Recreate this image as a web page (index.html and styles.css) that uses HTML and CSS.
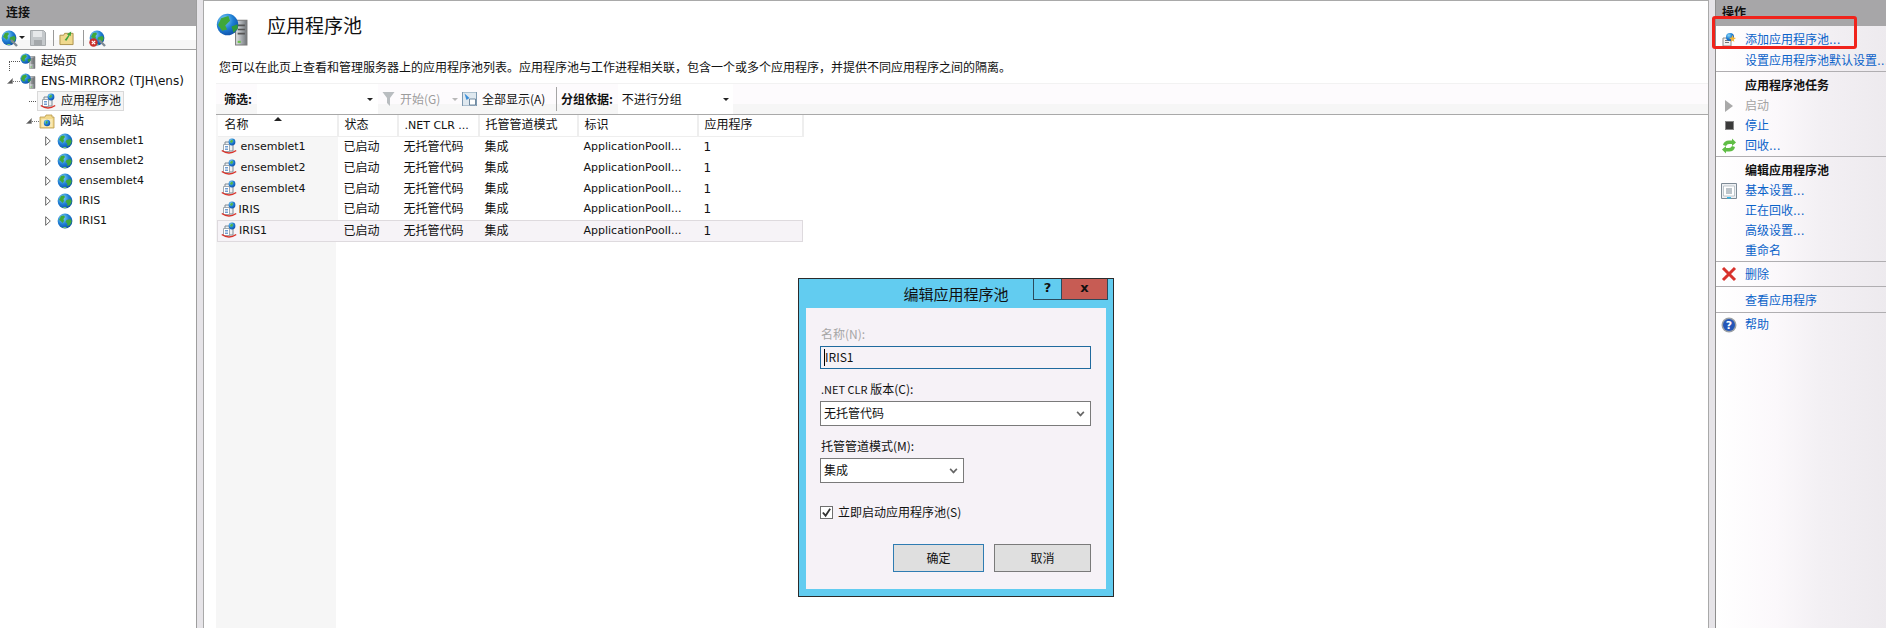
FILE: index.html
```html
<!DOCTYPE html>
<html lang="zh-CN">
<head>
<meta charset="utf-8">
<title>应用程序池</title>
<link rel="stylesheet" href="styles.css">
</head>
<body>
<svg class="defs" aria-hidden="true">
  <defs>
    <radialGradient id="gb" cx="35%" cy="30%" r="75%"><stop offset="0" stop-color="#86d6f8"/><stop offset=".55" stop-color="#1f7fd4"/><stop offset="1" stop-color="#0e4fa8"/></radialGradient>
    <linearGradient id="gs" x1="0" x2="1"><stop offset="0" stop-color="#e4e6e8"/><stop offset=".5" stop-color="#a9adb1"/><stop offset="1" stop-color="#6f7478"/></linearGradient>
    <symbol id="globe" viewBox="0 0 16 16">
      <circle cx="8" cy="8" r="7.4" fill="url(#gb)"/>
      <path d="M4 3 7 2.500 8 4 6.500 6 7 8 5.500 10 3.800 8 2 7Z" fill="#3fa83a"/>
      <path d="M9.500 7 13.500 6 14.800 8.500 13 12 10.500 13 10 10 8.500 9Z" fill="#3fa83a"/>
      <path d="M5 14 10 14 8 15.200Z" fill="#7bd06c"/>
    </symbol>
    <symbol id="server" viewBox="0 0 16 16">
      <path d="M9.500 3.500h5.500v12H9.500z" fill="url(#gs)" stroke="#777" stroke-width=".5"/>
      <path d="M10.500 6h3.500M10.500 8h3.500M10.500 10h3.500" stroke="#555" stroke-width=".8"/>
      <path d="M10.500 13.500h1.500v1h-1.500z" fill="#6ac34a"/>
      <circle cx="5.600" cy="5.600" r="5.200" fill="url(#gb)"/>
      <path d="M2.500 2.600 6 1.400 6.800 3.800 4.500 6 5.400 8 3 8.600 1 5.800Z" fill="#3fa83a"/>
      <path d="M7.500 6.500 10.400 5.400 10.600 7.500 8.500 9.600Z" fill="#2f9a3a"/>
    </symbol>
    <symbol id="pool" viewBox="0 0 16 16">
      <path d="M4 4h8v9H4z" fill="#eef0f2" stroke="#7f8a94"/>
      <path d="M2.500 6.500h6v7h-6z" fill="#fff" stroke="#8a949c" stroke-width=".8"/>
      <path d="M4 8.500h3M4 10h3M4 11.500h3" stroke="#4c86c6" stroke-width=".8"/>
      <circle cx="11" cy="4" r="3.400" fill="url(#gb)"/>
      <path d="M9.500 2.400 11.500 1.600 12 3.400 10.500 5 9 4Z" fill="#53b348"/>
      <path d="M.8 12.500Q8 17.500 15.200 12.500" fill="none" stroke="#d9342b" stroke-width="1.500"/>
    </symbol>
    <symbol id="folder" viewBox="0 0 16 16">
      <path d="M1 4h5l1-2h6v2h2v11H1z" fill="#f2d98c" stroke="#b8984a" stroke-width=".8"/>
      <path d="M2.500 6h11v8h-11z" fill="#f9e9b4"/>
      <circle cx="8" cy="10" r="3.200" fill="url(#gb)"/>
      <path d="M6.500 8.500 8.500 8 8.500 10 7 11Z" fill="#3fa83a"/>
    </symbol>
    <symbol id="twirl-open" viewBox="0 0 6 6"><path d="M5.500.5v5h-5z" fill="#595959" stroke="#8a8a8a" stroke-width=".6"/></symbol>
    <symbol id="twirl-closed" viewBox="0 0 6 10"><path d="M.7.7 5.300 5 .7 9.300z" fill="#fff" stroke="#666"/></symbol>
  </defs>
</svg>

<div class="app">
  <aside class="left">
    <div class="panel-head">连接</div>
    <div class="tools">
      <span class="ic-stop first-tool">
        <svg class="ic16"><use href="#globe"/></svg>
        <svg class="ic-plug" viewBox="0 0 8 8"><path d="M1 1 7 7" stroke="#7d8a94" stroke-width="2.400"/></svg>
      </span>
      <span class="caret dark"></span>
      <svg class="ic-save" viewBox="0 0 16 16"><path d="M.5.500h13l2 2v13H.5z" fill="#c4c8cb" stroke="#a6aaad"/><path d="M3 1h9v6H3z" fill="#e6e8ea"/><path d="M4 10h8v5.500H4z" fill="#a4a8ab"/></svg>
      <span class="tsep"></span>
      <svg class="ic-up" viewBox="0 0 16 16"><path d="M1 5h4l1-2h9v12H1z" fill="#f0d98e" stroke="#a98f49"/><path d="M6 10 10 5 8.500 4 13 1 12.500 6 11.500 5 8 11z" fill="#3ea53a"/></svg>
      <span class="tsep far"></span>
      <span class="ic-stop">
        <svg class="ic16"><use href="#globe"/></svg>
        <svg class="ic-plug" viewBox="0 0 8 8"><path d="M1 1 7 7" stroke="#7d8a94" stroke-width="2.400"/></svg>
        <svg class="ic-x" viewBox="0 0 9 9"><circle cx="4.500" cy="4.500" r="4.200" fill="#c9302c"/><path d="M2.800 2.800 6.200 6.200M6.200 2.800 2.800 6.200" stroke="#fff" stroke-width="1.200"/></svg>
      </span>
    </div>
    <ul class="tree">
      <li class="node n-start"><i class="elbow tall"></i><svg class="ic16"><use href="#server"/></svg><span>起始页</span></li>
      <li class="node n-host"><svg class="twirl-o"><use href="#twirl-open"/></svg><i class="dots d1"></i><svg class="ic16"><use href="#server"/></svg><span>ENS-MIRROR2 (TJH\ens)</span></li>
      <li class="node n-pool"><i class="elbow"></i><span class="sel"><svg class="ic16"><use href="#pool"/></svg><span>应用程序池</span></span></li>
      <li class="node n-sites"><svg class="twirl-o"><use href="#twirl-open"/></svg><i class="dots d2"></i><svg class="ic16"><use href="#folder"/></svg><span>网站</span></li>
      <li class="node n-site"><svg class="twirl-c"><use href="#twirl-closed"/></svg><svg class="ic16"><use href="#globe"/></svg><span>ensemblet1</span></li>
      <li class="node n-site"><svg class="twirl-c"><use href="#twirl-closed"/></svg><svg class="ic16"><use href="#globe"/></svg><span>ensemblet2</span></li>
      <li class="node n-site"><svg class="twirl-c"><use href="#twirl-closed"/></svg><svg class="ic16"><use href="#globe"/></svg><span>ensemblet4</span></li>
      <li class="node n-site"><svg class="twirl-c"><use href="#twirl-closed"/></svg><svg class="ic16"><use href="#globe"/></svg><span>IRIS</span></li>
      <li class="node n-site"><svg class="twirl-c"><use href="#twirl-closed"/></svg><svg class="ic16"><use href="#globe"/></svg><span>IRIS1</span></li>
    </ul>
  </aside>

  <main class="center">
    <header class="title-row">
      <svg class="ic-title"><use href="#server"/></svg>
      <h1>应用程序池</h1>
    </header>
    <p class="desc">您可以在此页上查看和管理服务器上的应用程序池列表。应用程序池与工作进程相关联，包含一个或多个应用程序，并提供不同应用程序之间的隔离。</p>
    <div class="filter">
      <span class="f-label">筛选:</span>
      <span class="combo c-filter"><span class="caret dark"></span></span>
      <svg class="ic-funnel" viewBox="0 0 12 14"><path d="M0 0h12L7.500 6v8L4.500 11V6z" fill="#b9bdc0"/></svg>
      <span class="f-off">开始(G)</span>
      <span class="caret pale"></span>
      <svg class="ic-show" viewBox="0 0 14 14"><path d="M0 0h14v14H0z" fill="#dfe8ef" stroke="#7d99b0"/><path d="M2 1.500 7 6 4 8z" fill="#3d8fd8"/><path d="M7 7h6v6H7z" fill="#fff" stroke="#52708a" stroke-width=".8"/></svg>
      <span class="f-on">全部显示(A)</span>
      <span class="f-sep"></span>
      <span class="f-label">分组依据:</span>
      <span class="combo c-group">不进行分组<span class="caret dark"></span></span>
    </div>
    <div class="list">
      <table class="grid">
        <thead>
          <tr><th class="w-name">名称<span class="sort"></span></th><th class="w-state">状态</th><th class="w-clr"><span class="lat">.NET CLR ...</span></th><th class="w-mode">托管管道模式</th><th class="w-id">标识</th><th class="w-apps">应用程序</th></tr>
        </thead>
        <tbody>
          <tr><td class="name"><svg class="ic16"><use href="#pool"/></svg><span class="lat gap">ensemblet1</span></td><td>已启动</td><td>无托管代码</td><td>集成</td><td class="lat">ApplicationPoolI...</td><td>1</td></tr>
          <tr><td class="name"><svg class="ic16"><use href="#pool"/></svg><span class="lat gap">ensemblet2</span></td><td>已启动</td><td>无托管代码</td><td>集成</td><td class="lat">ApplicationPoolI...</td><td>1</td></tr>
          <tr><td class="name"><svg class="ic16"><use href="#pool"/></svg><span class="lat gap">ensemblet4</span></td><td>已启动</td><td>无托管代码</td><td>集成</td><td class="lat">ApplicationPoolI...</td><td>1</td></tr>
          <tr><td class="name"><svg class="ic16"><use href="#pool"/></svg><span class="lat">IRIS</span></td><td>已启动</td><td>无托管代码</td><td>集成</td><td class="lat">ApplicationPoolI...</td><td>1</td></tr>
          <tr class="picked"><td class="name"><svg class="ic16"><use href="#pool"/></svg><span class="lat">IRIS1</span></td><td>已启动</td><td>无托管代码</td><td>集成</td><td class="lat">ApplicationPoolI...</td><td>1</td></tr>
        </tbody>
      </table>
    </div>
  </main>

  <aside class="right">
    <div class="panel-head">操作</div>
    <ul class="actions">
      <li class="act h20 first"><svg class="ic16 a-ic" viewBox="0 0 16 16"><path d="M2 6h8v8H2z" fill="#f3f3f3" stroke="#8c8c8c"/><path d="M4 8.500h4M4 10.500h4" stroke="#777"/><circle cx="9" cy="5" r="4" fill="url(#gb)"/><path d="M11.500 3 12.500 5.500 15 6 12.800 7.400 13.300 10 11.500 8.500 9.700 10 10.200 7.400 8 6 10.500 5.500z" fill="#f4b537"/></svg><a>添加应用程序池...</a></li>
      <li class="act h22 end"><a>设置应用程序池默认设置...</a></li>
      <li class="group">应用程序池任务</li>
      <li class="act h20"><svg class="a-ic play" viewBox="0 0 8 12"><path d="M0 0 8 6 0 12z" fill="#a9a9a9"/></svg><span class="off">启动</span></li>
      <li class="act h20"><span class="a-ic stop"></span><a>停止</a></li>
      <li class="act h21 end"><svg class="ic16 a-ic" viewBox="0 0 16 16"><path d="M2 7Q3 2.500 8 2.500L11 2.500 11 .5 15 4.500 11 8 11 6 8 6Q6 6 5 8z" fill="#5fbd45"/><path d="M14 9Q13 13.500 8 13.500L5 13.500 5 15.500 1 11.500 5 8 5 10 8 10Q10 10 11 8z" fill="#5fbd45"/></svg><a>回收...</a></li>
      <li class="group">编辑应用程序池</li>
      <li class="act h20"><svg class="ic16 a-ic" viewBox="0 0 16 16"><path d="M.5.500h15v15H.5z" fill="#eef0f3" stroke="#7e8b96"/><path d="M2.500 3h11v10h-11z" fill="#fff" stroke="#a7b1b9" stroke-width=".7"/><path d="M5 6h6M5 8h6M5 10h6" stroke="#7a8a96"/><path d="M6 14h4v1.500H6z" fill="#35b6e8"/></svg><a>基本设置...</a></li>
      <li class="act h20"><a>正在回收...</a></li>
      <li class="act h20"><a>高级设置...</a></li>
      <li class="act h21 end"><a>重命名</a></li>
      <li class="act h25 end pt"><svg class="ic16 a-ic" viewBox="0 0 16 16"><path d="M2 2 14 14M14 2 2 14" stroke="#d8322c" stroke-width="3"/></svg><a>删除</a></li>
      <li class="act h26 end pt"><a>查看应用程序</a></li>
      <li class="act h24"><svg class="ic16 a-ic" viewBox="0 0 16 16"><circle cx="8" cy="8" r="7.500" fill="#9aa0a6"/><circle cx="8" cy="8" r="6" fill="#2456b8"/><text class="q" x="8" y="12" text-anchor="middle">?</text></svg><a>帮助</a></li>
    </ul>
  </aside>
</div>

<div class="callout"></div>

<section class="dialog">
  <div class="dlg-title">编辑应用程序池</div>
  <div class="dlg-ctrls"><span class="d-help">?</span><span class="d-close">x</span></div>
  <form class="dlg-body">
    <label class="lbl dim">名称(N):</label>
    <div class="field active"><i class="cursor"></i>IRIS1</div>
    <label class="lbl"><span class="lat">.NET CLR</span> 版本(C):</label>
    <div class="field sel-box">无托管代码<span class="chev"></span></div>
    <label class="lbl">托管管道模式(M):</label>
    <div class="field sel-box short">集成<span class="chev"></span></div>
    <div class="check"><span class="box"><svg viewBox="0 0 12 12"><path d="M2 6 5 9.500 10 2" fill="none" stroke="#333" stroke-width="2"/></svg></span>立即启动应用程序池(S)</div>
    <div class="dlg-btns"><span class="btn primary">确定</span><span class="btn cancel">取消</span></div>
  </form>
</section>
</body>
</html>
```
FILE: styles.css
```css
* { box-sizing: border-box; }
html, body { margin: 0; height: 100%; overflow: hidden; }
body {
  position: relative;
  width: 1886px;
  height: 628px;
  background: #e6e4e8;
  font: 12px/16px "DejaVu Sans", "Noto Sans CJK SC", sans-serif;
  color: #111;
}
ul { list-style: none; margin: 0; padding: 0; }
.defs { position: absolute; width: 0; height: 0; }
.ic16 { width: 16px; height: 16px; flex: none; display: block; }
.lat { font-size: 11px; }

.app { display: flex; height: 628px; }

.left { width: 197px; flex: none; background: #fff; border-right: 1px solid #9e9e9e; }
.center { width: 1506px; flex: none; margin: 0 6px; padding: 0 0 0 12px; display: flex; flex-direction: column; background: #fff; border-left: 1px solid #a9a9a9; border-right: 1px solid #a9a9a9; border-top: 1px solid #a9a9a9; }
.right { flex: 1; border-left: 1px solid #8e8e8e; background: linear-gradient(to right, #fff 0, #fbf8fb 35%, #f3f0f4 60%, #edeaee 100%); }

.panel-head { height: 26px; padding: 6px 0 0 6px; background: #a7a6a8; font-weight: 700; line-height: 14px; }

.tools { height: 24px; display: flex; align-items: center; background: linear-gradient(#fff 0, #fff 60%, #f7f7f7 60%, #f7f7f7 100%); padding-left: 1px; border-bottom: 1px solid #a0a0a0; }
.caret { display: block; width: 0; height: 0; border: 3px solid transparent; border-top: 3px solid #222; border-bottom: 0; flex: none; }
.caret.dark { border-top-color: #222; }
.caret.pale { border-top-color: #b8b8b8; }
.tools .caret { margin: 0 5px 0 2px; }
.ic-save { width: 16px; height: 16px; flex: none; }
.ic-up { width: 15px; height: 16px; margin-left: 5px; flex: none; }
.tsep { width: 1px; height: 16px; background: #9a9a9a; margin-left: 7px; flex: none; }
.tsep.far { margin-left: 9px; }
.ic-stop { position: relative; margin-left: 5px; width: 16px; height: 16px; flex: none; }
.first-tool { margin-left: 0; }
.ic-plug { position: absolute; right: -1px; bottom: -1px; width: 8px; height: 8px; }
.ic-x { position: absolute; left: 0; top: 8px; width: 9px; height: 9px; }

.tree { padding-top: 1px; }
.node { height: 20px; display: flex; align-items: center; white-space: nowrap; }
.node > span { margin-left: 5px; }
.n-start { padding-left: 9px; }
.n-host { padding-left: 7px; }
.n-pool { padding-left: 29px; }
.n-sites { padding-left: 26px; }
.n-site { padding-left: 45px; }
.n-site .ic16 { margin-left: 6px; }
.n-site > span { margin-left: 6px; font-size: 11px; }
.elbow { display: block; width: 11px; height: 10px; flex: none; margin-bottom: -10px; border-top: 1px dotted #555; border-left: 1px dotted #555; }
.n-pool .elbow { width: 9px; border-left: 0; }
.dots { display: block; height: 0; flex: none; border-top: 1px dotted #777; }
.d1 { width: 7px; }
.d2 { width: 7px; }
.twirl-o { width: 6px; height: 6px; flex: none; }
.twirl-c { width: 6px; height: 10px; flex: none; }
.n-pool > .sel { margin-left: -1px; }
.sel { display: flex; align-items: center; height: 20px; width: 87px; padding-left: 2px; background: #f5f5f5; border: 1px solid #d9d9d9; }
.sel span { margin-left: 5px; }

.title-row { display: flex; align-items: center; height: 54px; flex: none; }
.ic-title { width: 33px; height: 33px; flex: none; margin-top: 3px; }
h1 { margin: 0 0 6px 18px; font-size: 19px; font-weight: 400; line-height: 26px; font-family: "Noto Sans CJK SC", sans-serif; }
.desc { margin: 4px 0 0 3px; height: 16px; flex: none; line-height: 16px; font-family: "Noto Sans CJK SC", sans-serif; }

.filter { margin-top: 8px; height: 32px; flex: none; display: flex; align-items: center; background: linear-gradient(#fdfbfd 68%, #f6f6f6 68%); border-top: 1px solid #f2f2f2; border-bottom: 1px solid #a9a9a9; padding-left: 8px; font-family: "Noto Sans CJK SC", sans-serif; }
.f-label { font-weight: 700; font-size: 12px; flex: none; }
.combo { display: flex; align-items: center; height: 30px; background: #fff; flex: none; }
.combo .caret { margin-left: auto; }
.c-filter { width: 121px; margin-left: 5px; padding-right: 5px; }
.c-group { width: 115px; margin-left: 5px; padding: 0 4px 0 4px; }
.ic-funnel { width: 13px; height: 14px; margin-left: 4px; flex: none; }
.f-off { color: #9c9c9c; margin-left: 5px; width: 52px; flex: none; white-space: nowrap; }
.ic-show { width: 15px; height: 14px; margin-left: 4px; flex: none; }
.f-on { margin-left: 5px; width: 74px; flex: none; white-space: nowrap; }
.f-sep { width: 1px; height: 24px; background: #a5a5a5; margin-right: 4px; flex: none; }

.list { flex: 1; background: linear-gradient(to right, #f6f6f6 120px, #fff 120px); }
.grid { border-collapse: collapse; table-layout: fixed; width: 585px; margin-left: 1px; }
.grid th { height: 21px; padding: 0 0 0 6px; font-weight: 400; text-align: left; background: #fff; border-right: 2px solid #eeeeee; border-bottom: 1px solid #eeeeee; white-space: nowrap; overflow: hidden; position: relative; }
.grid .w-name { width: 120px; padding-left: 7px; }
.w-state { width: 60px; }
.w-clr { width: 81px; }
.w-mode { width: 99px; }
.w-id { width: 120px; }
.w-apps { width: 105px; }
.sort { position: absolute; left: 56px; top: 2px; width: 0; height: 0; border: 4px solid transparent; border-bottom: 4px solid #222; border-top: 0; }
.grid td { height: 21px; padding: 0 0 0 6px; white-space: nowrap; overflow: hidden; }
.grid td.name { padding: 0 0 0 3px; background: #f6f6f6; }
.grid td.name .ic16 { display: inline-block; vertical-align: -4px; margin-right: 2px; }
.gap { margin-left: 2px; }
.picked td { background: #f6f3f7; border-top: 1px solid #dedade; border-bottom: 1px solid #dedade; }
.picked td:first-child { border-left: 1px solid #dedade; }
.picked td:last-child { border-right: 1px solid #dedade; }
.grid .picked td.name { background: #f6f3f7; }

.act { display: flex; align-items: center; padding-left: 29px; position: relative; white-space: nowrap; }
.act a { color: #0a62c9; }
.act .off { color: #a3a3a3; }
.h20 { height: 20px; }
.h21 { height: 21px; }
.h22 { height: 22px; }
.h24 { height: 24px; }
.h25 { height: 25px; }
.h26 { height: 26px; }
.pt { padding-top: 2px; }
.first { margin-top: 4px; }
.end { border-bottom: 1px solid #b0aeb1; }
.a-ic { position: absolute; left: 5px; top: 50%; margin-top: -8px; }
.play { left: 9px; width: 8px; height: 12px; margin-top: -6px; }
.stop { left: 9px; width: 9px; height: 9px; margin-top: -5px; background: #3a3a3a; border: 1px solid #888; }
.group { height: 24px; padding: 6px 0 0 29px; font-weight: 700; line-height: 16px; white-space: nowrap; }
.q { fill: #fff; font: 700 11px "DejaVu Sans", sans-serif; }

.callout { position: absolute; left: 1712px; top: 16px; width: 145px; height: 33px; border: 3px solid #f0231b; border-radius: 3px; }

.dialog { position: absolute; left: 798px; top: 278px; width: 316px; height: 319px; background: #62ccf0; border: 1px solid #2b2b2b; padding: 29px 7px 7px; }
.dlg-title { position: absolute; left: 0; right: 0; top: 5px; text-align: center; font-size: 15px; line-height: 20px; font-family: "Noto Sans CJK SC", sans-serif; }
.dlg-ctrls { position: absolute; right: 5px; top: 0; display: flex; height: 21px; }
.d-help, .d-close { display: flex; justify-content: center; border: 1px solid #2b4a5c; border-top: 0; font: 700 13px/17px "DejaVu Sans", sans-serif; }
.d-help { width: 29px; }
.d-close { width: 46px; border-left: 0; background: #c75c54; }
.dlg-body { display: flex; flex-direction: column; height: 100%; background: #f6f2f7; padding: 18px 15px 0 14px; font-family: "Noto Sans CJK SC", sans-serif; }
.lbl { height: 16px; line-height: 16px; padding-left: 1px; }
.dim { color: #a6a6a6; }
.field { height: 23px; margin-top: 4px; margin-bottom: 12px; background: #fff; border: 1px solid #7a7a7a; padding-left: 3px; line-height: 20px; position: relative; }
.field.active { border-color: #1f6a9e; background: #f6f2f7; }
.cursor { display: inline-block; width: 1px; height: 17px; background: #000; vertical-align: -4px; }
.sel-box { height: 25px; line-height: 22px; }
.short { width: 144px; }
.chev { position: absolute; right: 6px; top: 7px; width: 7px; height: 7px; border-right: 2px solid #666; border-bottom: 2px solid #666; transform: rotate(45deg) scale(.8); }
.check { display: flex; align-items: center; margin-top: 7px; height: 20px; }
.box { width: 13px; height: 13px; background: #fff; border: 1px solid #6f6f6f; margin-right: 5px; display: block; }
.box svg { display: block; width: 11px; height: 11px; }
.dlg-btns { display: flex; justify-content: flex-end; gap: 10px; margin-top: 22px; }
.btn { height: 28px; background: #dfdfdf; border: 1px solid #7a7a7a; text-align: center; line-height: 25px; }
.primary { width: 91px; border-color: #2f7cb2; }
.cancel { width: 97px; }
```
